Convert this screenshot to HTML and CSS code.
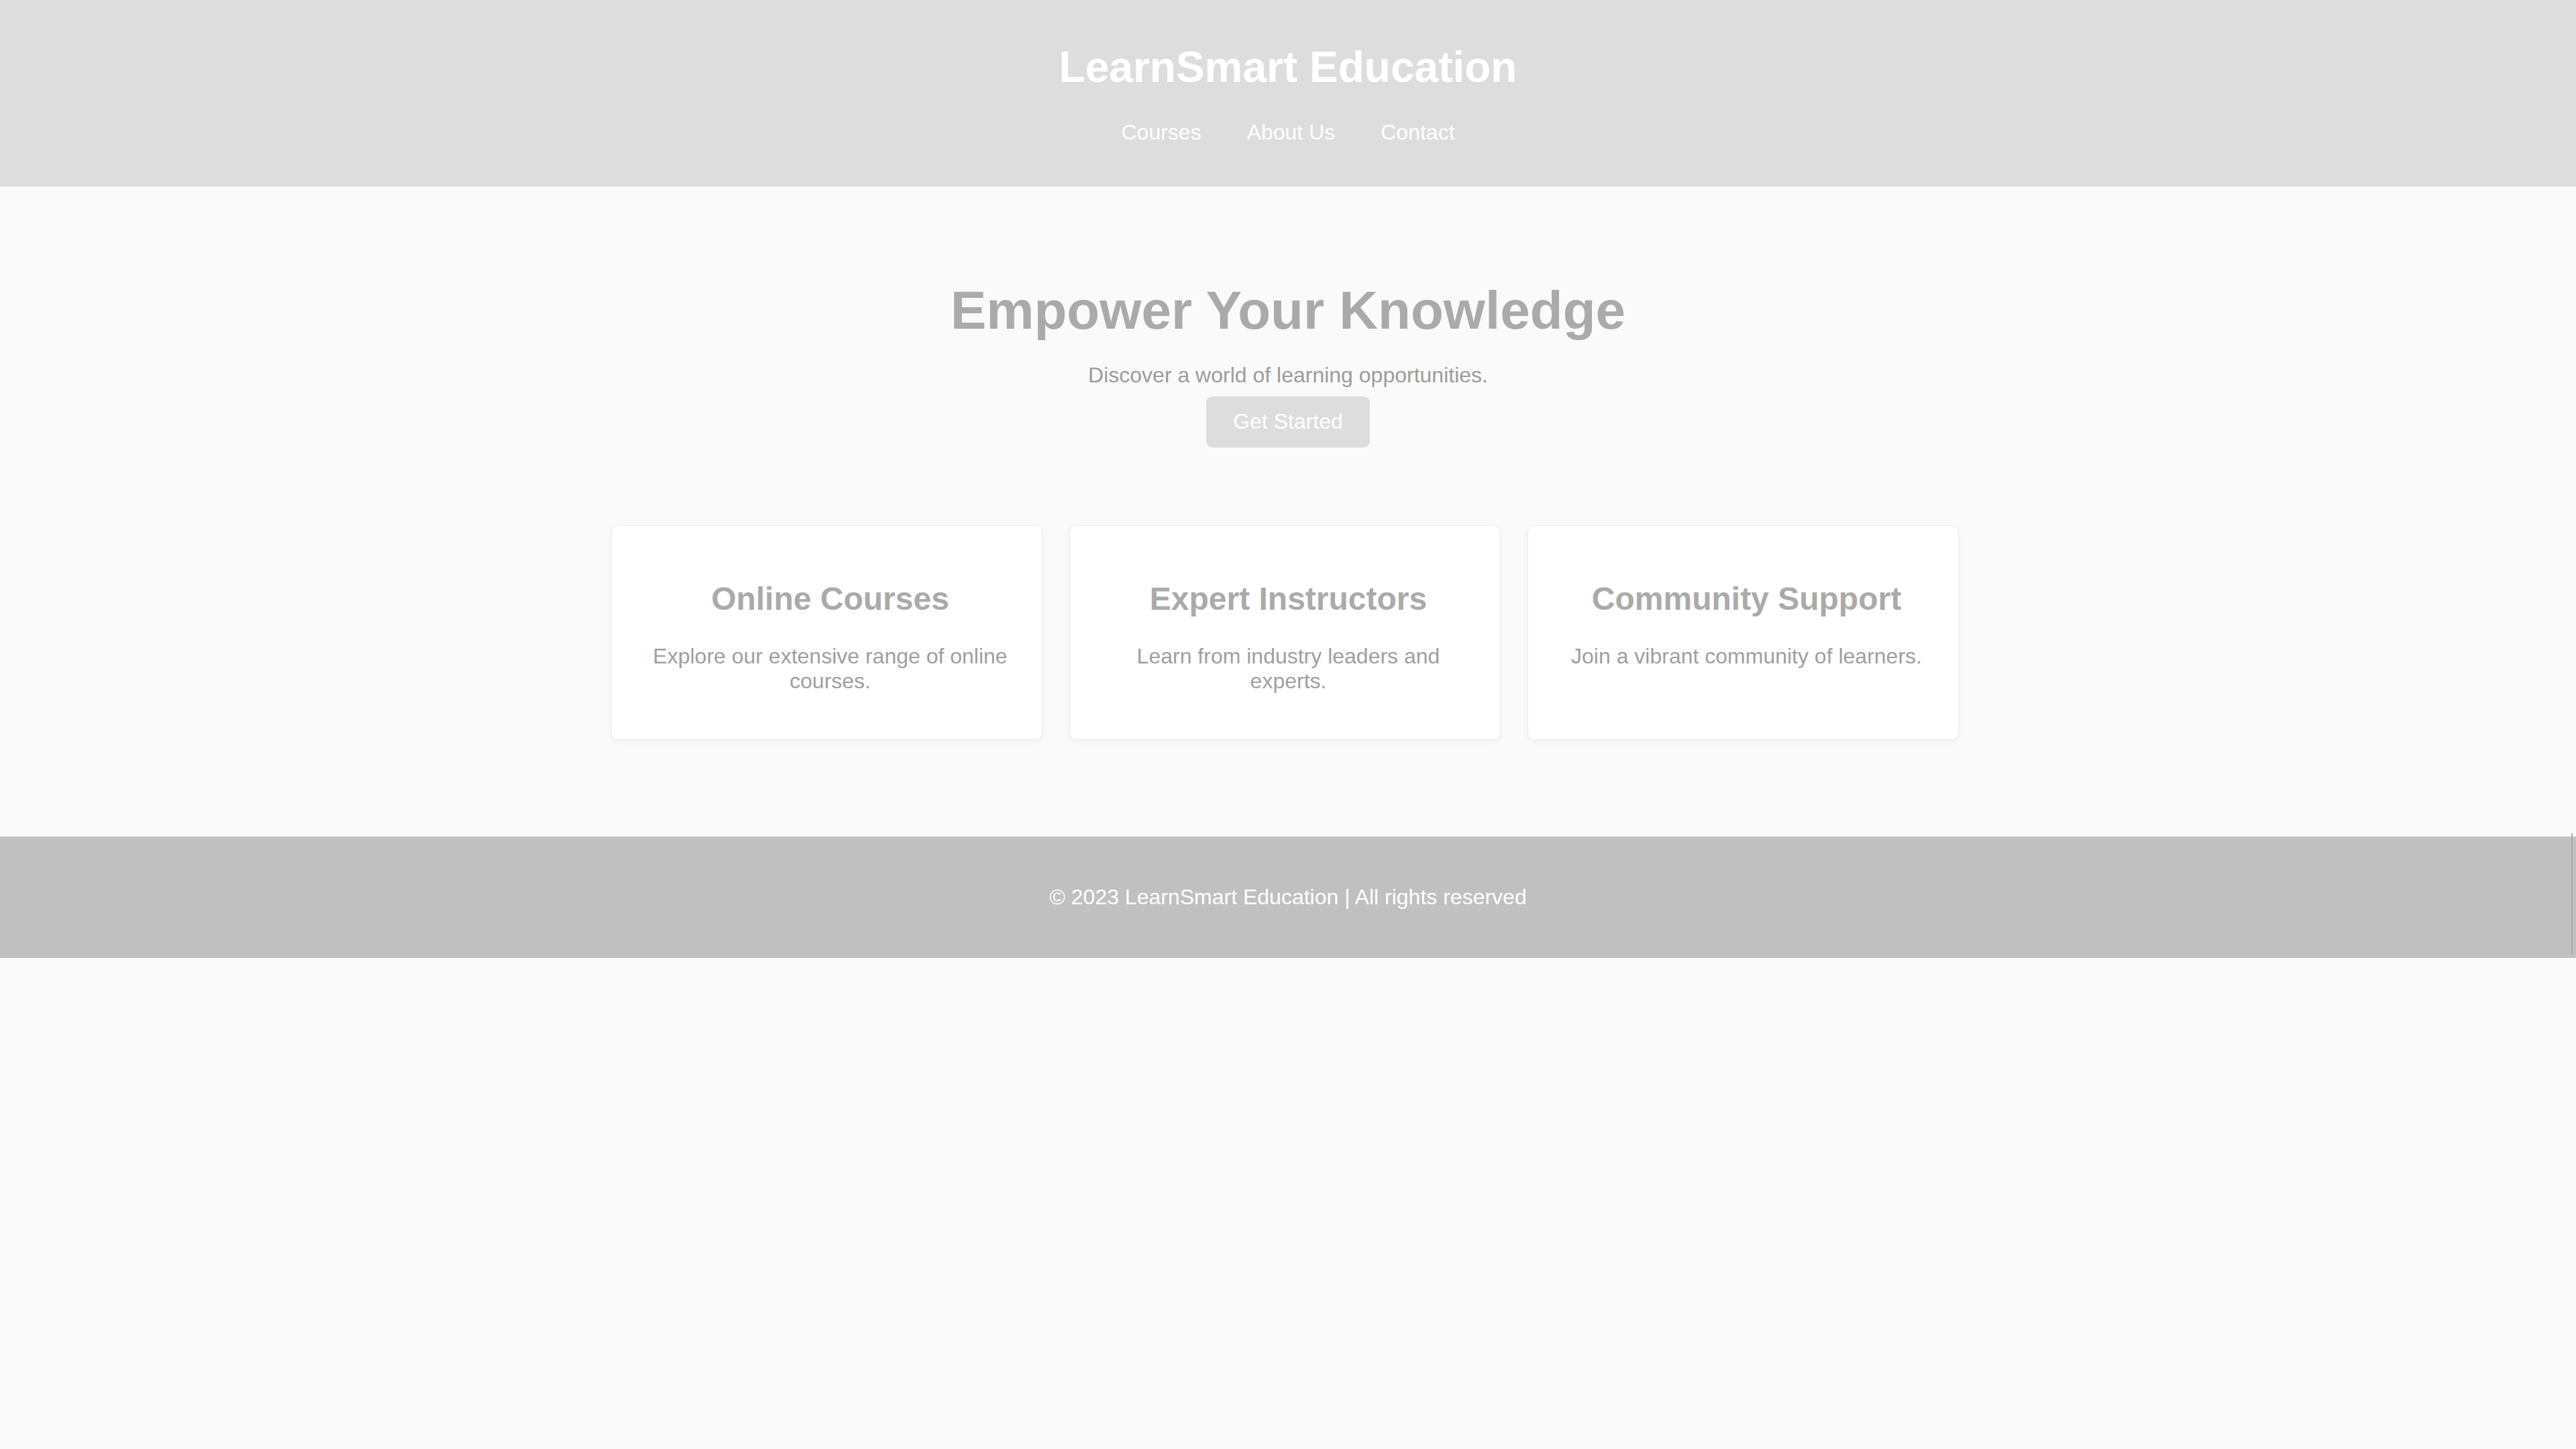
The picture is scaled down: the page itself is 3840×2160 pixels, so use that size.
FILE: index.html
```html
<!DOCTYPE html>
<html lang="en">
<head>
<meta charset="utf-8">
<title>LearnSmart Education</title>
<link rel="stylesheet" href="styles.css">
</head>
<body>
<header class="site-header">
  <h1 class="brand">LearnSmart Education</h1>
  <nav class="nav">
    <a class="nav-link" href="#">Courses</a>
    <a class="nav-link" href="#">About Us</a>
    <a class="nav-link" href="#">Contact</a>
  </nav>
</header>
<main class="main">
  <section class="hero">
    <h2 class="hero-title">Empower Your Knowledge</h2>
    <p class="hero-text">Discover a world of learning opportunities.</p>
    <a class="btn" href="#">Get Started</a>
  </section>
  <section class="features">
    <div class="card">
      <h3 class="card-title">Online Courses</h3>
      <p class="card-text">Explore our extensive range of online courses.</p>
    </div>
    <div class="card">
      <h3 class="card-title">Expert Instructors</h3>
      <p class="card-text">Learn from industry leaders and experts.</p>
    </div>
    <div class="card">
      <h3 class="card-title">Community Support</h3>
      <p class="card-text">Join a vibrant community of learners.</p>
    </div>
  </section>
</main>
<footer class="site-footer">
  <p class="footer-text">© 2023 LearnSmart Education | All rights reserved</p>
</footer>
</body>
</html>
```

FILE: styles.css
```css
html, body {
  margin: 0;
  padding: 0;
}

body {
  background: #fafafa;
  font-family: "Liberation Sans", Arial, sans-serif;
  font-size: 32px;
  line-height: normal;
  min-height: 2160px;
}

.site-header {
  background: #dddddd;
  padding: 63px 0 62px;
  text-align: center;
}

.brand {
  margin: 0 0 42px;
  font-size: 64px;
  font-weight: bold;
  color: #ffffff;
  line-height: normal;
}

.nav {
  display: flex;
  justify-content: center;
  gap: 68px;
}

.nav-link {
  color: #ffffff;
  text-decoration: none;
  font-size: 32px;
}

.main {
  display: flex;
  flex-direction: column;
}

.hero {
  display: flex;
  flex-direction: column;
  align-items: center;
  padding-top: 139px;
  text-align: center;
}

.hero-title {
  margin: 0 0 32px;
  font-size: 80px;
  font-weight: bold;
  color: #aaaaaa;
  line-height: normal;
}

.hero-text {
  margin: 0 0 13px;
  font-size: 32px;
  color: #9c9c9c;
}

.btn {
  display: block;
  background: #dddddd;
  color: #ffffff;
  text-decoration: none;
  font-size: 32px;
  padding: 19px 40px 20px;
  border-radius: 9px;
}

.features {
  display: grid;
  grid-template-columns: repeat(3, 1fr);
  gap: 40px;
  width: 2009px;
  margin: 116px 0 0 calc(50% - 1009px);
}

.card {
  background: #ffffff;
  border: 1px solid #ececec;
  border-radius: 10px;
  box-shadow: 0 3px 8px rgba(0, 0, 0, 0.04);
  padding: 40px 35px 40px 45px;
  text-align: center;
}

.card-title {
  margin: 41px 0 40px;
  font-size: 48px;
  font-weight: bold;
  color: #aaaaaa;
  line-height: normal;
}

.card-text {
  margin: 0 0 28px;
  font-size: 32px;
  color: #9f9f9f;
}

.site-footer {
  position: relative;
  margin-top: 144px;
  background: #c0c0c0;
  padding: 72px 0;
  text-align: center;
}

.site-footer::after {
  content: "";
  position: absolute;
  right: 5px;
  top: -5px;
  bottom: 5px;
  width: 2px;
  background: #a9a9a9;
}

.footer-text {
  margin: 0;
  color: #ffffff;
  font-size: 32px;
}
```
